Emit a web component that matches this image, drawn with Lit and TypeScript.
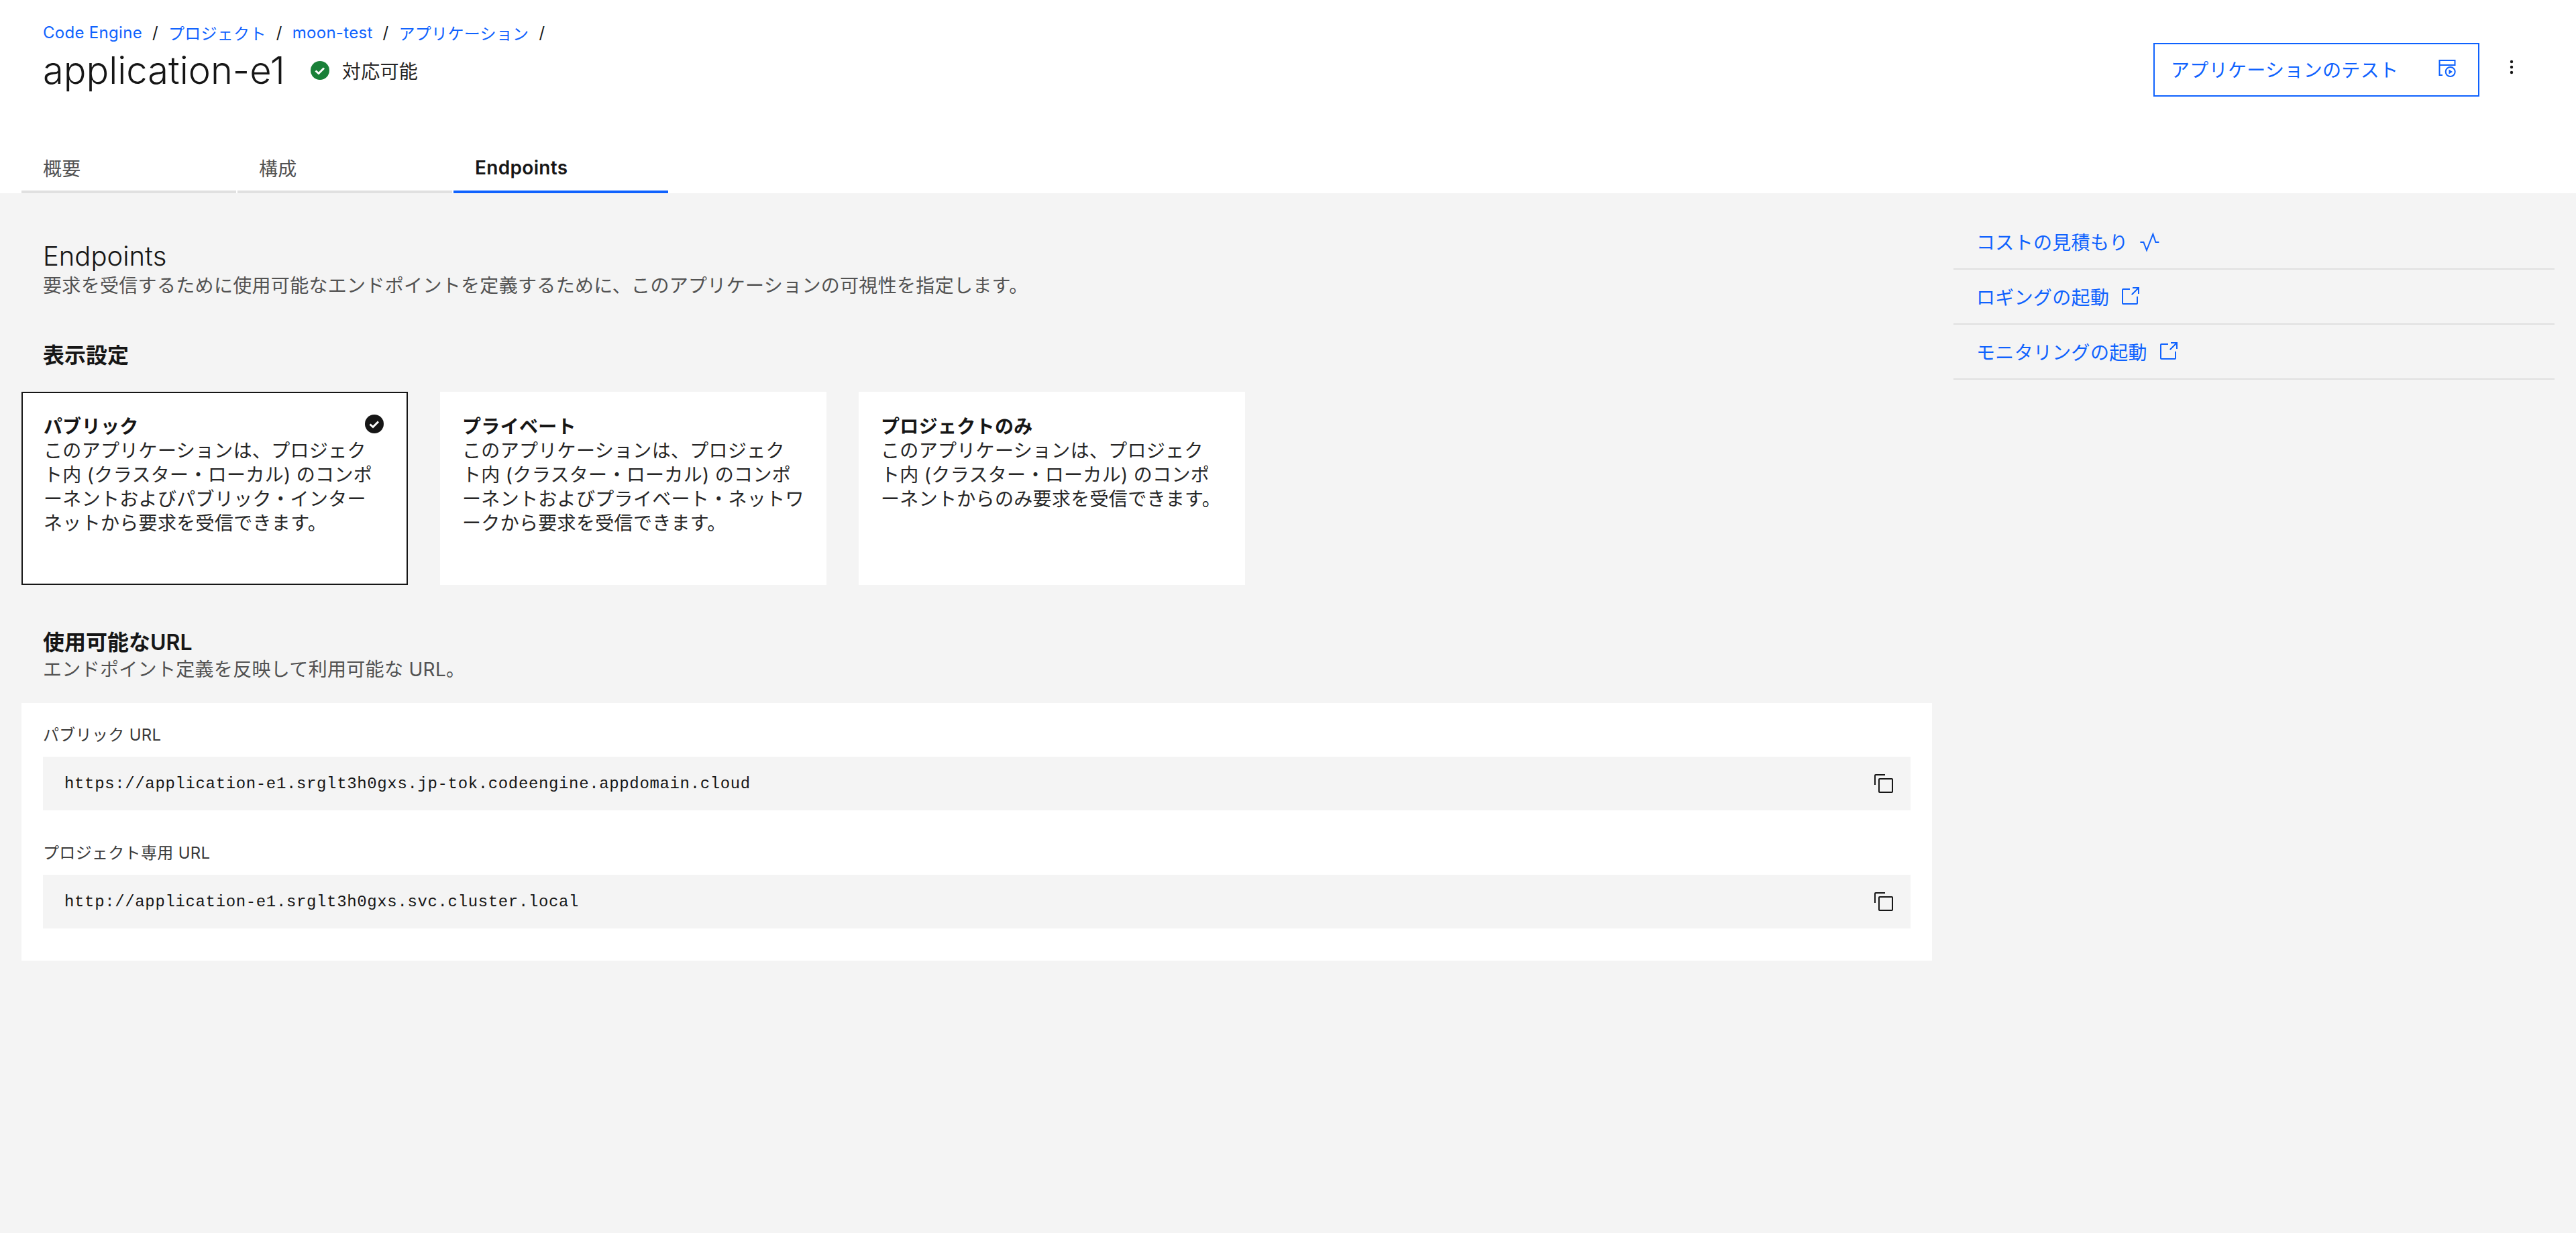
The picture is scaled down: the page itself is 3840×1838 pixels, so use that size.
import { LitElement, html, css, svg } from "lit";
import { customElement } from "lit/decorators.js";

const launch = svg`<path d="M26 28H6a2 2 0 0 1-2-2V6a2 2 0 0 1 2-2h10v2H6v20h20V16h2v10a2 2 0 0 1-2 2z"/><path d="M20 2v2h6.586L18 12.586 19.414 14 28 5.414V12h2V2H20z"/>`;
const copy = svg`<path d="M28 10v18H10V10h18m0-2H10a2 2 0 0 0-2 2v18a2 2 0 0 0 2 2h18a2 2 0 0 0 2-2V10a2 2 0 0 0-2-2z"/><path d="M4 18H2V4a2 2 0 0 1 2-2h14v2H4z"/>`;
const activity = svg`<polyline points="2.4,17 7.4,17 12,29 21.4,5 25.4,17 30.4,17" fill="none" stroke="currentColor" stroke-width="2"/>`;
const appTest = svg`<g fill="none" stroke="currentColor" stroke-width="2"><path d="M9 25H4.5V3h23v7h-23"/><circle cx="20.7" cy="20" r="7"/></g><path d="M18.5 16.5v7l5.5-3.5z"/>`;

const cards = [
  { title: "パブリック", selected: true, lines: ["このアプリケーションは、プロジェク", "ト内 (クラスター・ローカル) のコンポ", "ーネントおよびパブリック・インター", "ネットから要求を受信できます。"] },
  { title: "プライベート", selected: false, lines: ["このアプリケーションは、プロジェク", "ト内 (クラスター・ローカル) のコンポ", "ーネントおよびプライベート・ネットワ", "ークから要求を受信できます。"] },
  { title: "プロジェクトのみ", selected: false, lines: ["このアプリケーションは、プロジェク", "ト内 (クラスター・ローカル) のコンポ", "ーネントからのみ要求を受信できます。"] },
];
const urls = [
  { label: "パブリック URL", url: "https://application-e1.srglt3h0gxs.jp-tok.codeengine.appdomain.cloud" },
  { label: "プロジェクト専用 URL", url: "http://application-e1.srglt3h0gxs.svc.cluster.local" },
];
const links = [
  { text: "コストの見積もり", icon: activity },
  { text: "ロギングの起動", icon: launch },
  { text: "モニタリングの起動", icon: launch },
];
const crumbs = ["Code Engine", "プロジェクト", "moon-test", "アプリケーション"];
const tabs = ["概要", "構成", "Endpoints"];

@customElement("app-root")
export class AppRoot extends LitElement {
  static styles = css`
    :host {
      display: block;
      min-height: 1838px;
      background: #f4f4f4;
      color: #161616;
      font-family: "Inter", "Noto Sans CJK JP", sans-serif;
      letter-spacing: 0.32px;
    }
    * { box-sizing: border-box; }
    svg { display: block; fill: currentColor; flex: none; }
    .header {
      height: 288px;
      background: #fff;
      display: flex;
      flex-direction: column;
      padding: 32px 32px 0;
    }
    .head-main { display: flex; flex: 1; justify-content: space-between; align-items: flex-start; }
    .head-left { padding: 0 0 0 32px; }
    .crumbs { display: flex; align-items: center; height: 32px; font-size: 24px; color: #0f62fe; letter-spacing: 0.3px; }
    .crumbs .sep { color: #161616; margin: 0 15px; }
    .title-row { display: flex; align-items: center; height: 64px; margin-top: 9px; }
    .title { font-size: 56px; font-weight: 300; line-height: 64px; margin: 0; letter-spacing: 0; }
    .status { display: flex; align-items: center; margin-left: 38px; font-size: 28px; color: #262626; }
    .status svg { margin-right: 19px; }
    .actions { display: flex; align-items: flex-start; margin-top: 32px; margin-right: 16px; }
    .btn {
      width: 486px;
      height: 80px;
      border: 2px solid #0f62fe;
      color: #0f62fe;
      display: flex;
      align-items: center;
      justify-content: space-between;
      padding: 0 30px 2px 24px;
      font-size: 28px;
    }
    .kebab { width: 96px; height: 80px; padding: 0 0 8px 44px; display: flex; flex-direction: column; justify-content: center; }
    .kebab svg { color: #161616; }
    .tabs { display: flex; gap: 2px; }
    .tab {
      width: 320px;
      height: 92px;
      padding: 20px 32px 0;
      border-bottom: 4px solid #e0e0e0;
      display: flex;
      align-items: center;
      font-size: 28px;
      color: #525252;
    }
    .tab.active { border-bottom-color: #0f62fe; color: #161616; font-weight: 600; }
    .body { display: grid; grid-template-columns: 2848px 896px; column-gap: 32px; padding-left: 32px; }
    .intro { padding: 68px 32px 0; }
    .h-page { font-size: 40px; font-weight: 300; line-height: 52px; margin: 0; letter-spacing: 0; }
    .muted { font-size: 28px; line-height: 36px; color: #525252; margin: 0; }
    .h-sec { font-size: 32px; font-weight: 600; line-height: 40px; margin: 0; letter-spacing: 0; }
    .vis { margin: 66px 0 34px 32px; }
    .cards { display: flex; gap: 48px; }
    .card {
      position: relative;
      width: 576px;
      height: 288px;
      background: #fff;
      padding: 34px 32px 32px 33px;
      font-size: 28px;
      line-height: 36px;
      white-space: nowrap;
      color: #262626;
    }
    .card.selected { outline: 2px solid #161616; outline-offset: -2px; }
    .card b { display: block; font-weight: 600; color: #161616; }
    .check { position: absolute; top: 34px; right: 36px; color: #161616; }
    .urls-head { padding: 66px 32px 0; }
    .urls-head .muted { margin-top: 2px; }
    .panel { margin-top: 32px; background: #fff; padding: 32px; height: 384px; width: 2848px; }
    .label { font-size: 24px; line-height: 32px; height: 32px; color: #393939; margin-bottom: 16px; }
    .code {
      height: 80px;
      background: #f4f4f4;
      display: flex;
      align-items: center;
      justify-content: space-between;
      padding: 0 24px 0 32px;
      font-family: "Liberation Mono", monospace;
      font-size: 24px;
      letter-spacing: 0.64px;
      color: #161616;
      margin-bottom: 48px;
    }
    .side { padding-top: 32px; }
    .side-link {
      height: 82px;
      display: flex;
      align-items: center;
      gap: 15px;
      padding: 0 34px;
      border-bottom: 2px solid #e0e0e0;
      font-size: 28px;
      color: #0f62fe;
    }
  `;

  render() {
    return html`
      <div class="header">
        <div class="head-main">
          <div class="head-left">
            <div class="crumbs">
              ${crumbs.map((c) => html`<span>${c}</span><span class="sep">/</span>`)}
            </div>
            <div class="title-row">
              <h1 class="title">application-e1</h1>
              <div class="status">
                <svg width="28" height="28" viewBox="0 0 28 28"><circle cx="14" cy="14" r="14" fill="#198038"/><path d="M7.5 14.5l4.5 4 8-8" fill="none" stroke="#fff" stroke-width="3"/></svg>
                対応可能
              </div>
            </div>
          </div>
          <div class="actions">
            <div class="btn"><span>アプリケーションのテスト</span><svg width="32" height="32" viewBox="0 0 32 32">${appTest}</svg></div>
            <div class="kebab"><svg width="8" height="24" viewBox="0 0 8 24"><circle cx="4" cy="4" r="2.2"/><circle cx="4" cy="12" r="2.2"/><circle cx="4" cy="20" r="2.2"/></svg></div>
          </div>
        </div>
        <div class="tabs">
          ${tabs.map((t, i) => html`<div class="tab ${i === 2 ? "active" : ""}">${t}</div>`)}
        </div>
      </div>
      <div class="body">
        <div>
          <div class="intro">
            <h2 class="h-page">Endpoints</h2>
            <p class="muted">要求を受信するために使用可能なエンドポイントを定義するために、このアプリケーションの可視性を指定します。</p>
          </div>
          <h3 class="h-sec vis">表示設定</h3>
          <div class="cards">
            ${cards.map((c) => html`
              <div class="card ${c.selected ? "selected" : ""}">
                <b>${c.title}</b>
                ${c.lines.map((l) => html`<div>${l}</div>`)}
                ${c.selected ? html`<svg class="check" width="28" height="28" viewBox="0 0 28 28"><circle cx="14" cy="14" r="14"/><path d="M7.5 14.5l4.5 4 8-8" fill="none" stroke="#fff" stroke-width="3"/></svg>` : ""}
              </div>`)}
          </div>
          <div class="urls-head">
            <h3 class="h-sec">使用可能なURL</h3>
            <p class="muted">エンドポイント定義を反映して利用可能な URL。</p>
          </div>
          <div class="panel">
            ${urls.map((u) => html`
              <div class="label">${u.label}</div>
              <div class="code"><span>${u.url}</span><svg width="32" height="32" viewBox="0 0 32 32">${copy}</svg></div>`)}
          </div>
        </div>
        <div class="side">
          ${links.map((l) => html`<div class="side-link"><span>${l.text}</span><svg width="32" height="32" viewBox="0 0 32 32">${l.icon}</svg></div>`)}
        </div>
      </div>
    `;
  }
}
